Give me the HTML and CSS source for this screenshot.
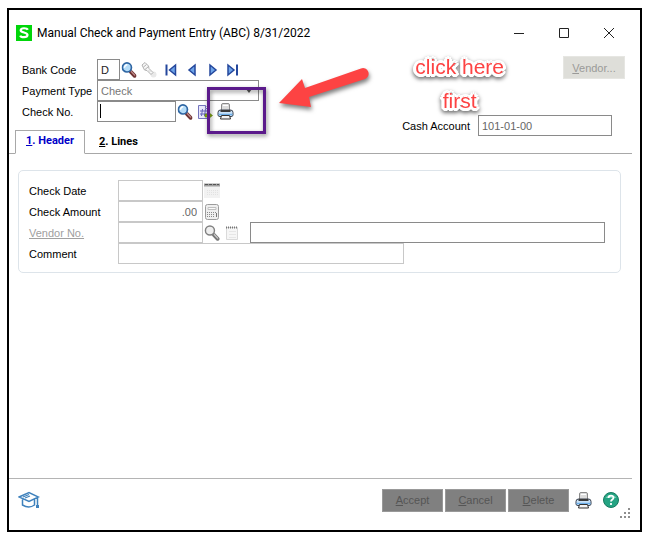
FILE: index.html
```html
<!DOCTYPE html>
<html lang="en">
<head>
  <meta charset="UTF-8">
  <title>Manual Check and Payment Entry</title>
  <link rel="stylesheet" href="styles.css">
</head>
<body>

<!-- Shared icons -->
<svg class="symbols" aria-hidden="true">
  <symbol id="lens" viewBox="0 0 16 17">
    <path d="M10 10.500l4 4.200" stroke="#6f3434" stroke-width="4" stroke-linecap="round"/>
    <path d="M10.500 10.200l3.500 3.700" stroke="#c48f8f" stroke-width="1.400" stroke-linecap="round"/>
    <circle cx="5.800" cy="5.800" r="4.800" fill="#b4dcf8" stroke="#2f66a3" stroke-width="1.800"/>
    <path d="M3.200 6a3 3 0 0 1 3-3" fill="none" stroke="#fff" stroke-width="1.500"/>
  </symbol>
  <symbol id="printer" viewBox="0 0 17 17">
    <path d="M4.500 8V2q0-1.500 1.500-1.500h5q1.500 0 1.500 1.500v6z" fill="#dcdcdc" stroke="#8a8a8a"/>
    <path d="M6 2.500h5" stroke="#fff"/>
    <path d="M1 9.500Q1 7 3.500 7h10Q16 7 16 9.500V12q0 1.500-2 1.500H3q-2 0-2-1.500z" fill="#c9e2f8" stroke="#39414f"/>
    <path d="M3.500 8h10" stroke="#3a3a3a" stroke-width="2"/>
    <path d="M1.500 11.500h14" stroke="#6caee8" stroke-width="1.500"/>
    <path d="M4.500 12.500h8l1 3.500h-10z" fill="#f4f4f4" stroke="#333"/>
  </symbol>
</svg>

<div class="window">
  <header class="titlebar">
    <svg class="logo" viewBox="0 0 16 16" aria-hidden="true">
      <rect width="16" height="16" fill="#00d60a"/>
      <path d="M11.800 4.800C11 3 5 2.300 4.700 5.200c-.2 3 7 1.700 6.800 4.800-.2 3-6.500 2.700-7.300.6" fill="none" stroke="#fff" stroke-width="2.200"/>
    </svg>
    <h1>Manual Check and Payment Entry (ABC) 8/31/2022</h1>
    <div class="window-controls">
      <button aria-label="Minimize"><svg viewBox="0 0 12 12"><path d="M1 6.500h10"/></svg></button>
      <button aria-label="Maximize"><svg viewBox="0 0 12 12"><path d="M1.500 1.500h9v9h-9z"/></svg></button>
      <button aria-label="Close"><svg viewBox="0 0 12 12"><path d="M1 1l10 10M11 1L1 11"/></svg></button>
    </div>
  </header>

  <section class="entry">
    <div class="entry-fields">
      <label for="bankCode">Bank Code</label>
      <div class="field-row">
        <input type="text" id="bankCode" class="bank-code" value="D">
        <button class="icon" aria-label="Find bank"><svg viewBox="0 0 16 17"><use href="#lens"/></svg></button>
        <button class="icon" aria-label="Filter" disabled><svg viewBox="0 0 16 16">
          <circle cx="12.500" cy="12.500" r="3" fill="#e9e9e9"/>
          <path d="M1 3l3-2.500L7.500 4 8 6.500l4 4-2 2-4-4L3.500 8z" fill="#f8f8f8" stroke="#b0b0b0"/>
          <path d="M2.500 5l3-2.500M4 7.500L7.500 4.500M8 8.500l1 1" stroke="#b0b0b0"/>
        </svg></button>
        <div class="record-nav">
          <button class="icon" aria-label="First record"><svg viewBox="0 0 16 16"><path d="M3.500 2.500v11" stroke="#24479c" stroke-width="2"/><path d="M12.500 3v10L6.500 8z" fill="#6ea4e8" stroke="#24479c" stroke-width="1.500"/></svg></button>
          <button class="icon" aria-label="Previous record"><svg viewBox="0 0 16 16"><path d="M11 3v10L5 8z" fill="#6ea4e8" stroke="#24479c" stroke-width="1.500"/></svg></button>
          <button class="icon" aria-label="Next record"><svg viewBox="0 0 16 16"><path d="M5 3v10l6-5z" fill="#6ea4e8" stroke="#24479c" stroke-width="1.500"/></svg></button>
          <button class="icon" aria-label="Last record"><svg viewBox="0 0 16 16"><path d="M2 3v10l6-5z" fill="#6ea4e8" stroke="#24479c" stroke-width="1.500"/><path d="M11 2.500v11" stroke="#24479c" stroke-width="2"/></svg></button>
        </div>
      </div>

      <label for="paymentType">Payment Type</label>
      <div class="select-wrap">
        <select id="paymentType" disabled><option>Check</option></select>
        <svg viewBox="0 0 6 4" aria-hidden="true"><path d="M0 0h6L3 4z" fill="#555"/></svg>
      </div>

      <label for="checkNo">Check No.</label>
      <div class="field-row">
        <div class="check-wrap"><input type="text" id="checkNo" class="check-no"><span class="caret"></span></div>
        <button class="icon" aria-label="Find check"><svg viewBox="0 0 16 17"><use href="#lens"/></svg></button>
        <button class="icon" aria-label="Next check number"><svg viewBox="0 0 16 16">
          <path d="M1.500 1.500h7l3 3v10h-10z" fill="#e8e8fb" stroke="#7474bd"/>
          <path d="M8.500 1.500v3h3" fill="#fff" stroke="#7474bd"/>
          <path d="M5.500 5l-1 7M8.500 5l-1 7M3 7h7M3 10h7" stroke="#6464ba"/>
          <path d="M8 10h3V8l4.500 3.500L11 15v-2H8z" fill="#8bb414" stroke="#5e8209" stroke-width=".6"/>
        </svg></button>
        <button class="icon print" aria-label="Print check"><svg viewBox="0 0 17 17"><use href="#printer"/></svg></button>
      </div>
    </div>

    <div class="entry-side">
      <button class="vendor" disabled><u>V</u>endor...</button>
      <div class="cash-account">
        <label for="cashAccount">Cash Account</label>
        <input type="text" id="cashAccount" value="101-01-00" readonly>
      </div>
    </div>
  </section>

  <nav class="tabs">
    <a href="#header" class="active"><u>1</u>. Header</a>
    <a href="#lines"><u>2</u>. Lines</a>
  </nav>

  <main class="tab-page" id="header">
    <div class="panel">
      <label for="checkDate">Check Date</label>
      <div class="field-row">
        <input type="text" id="checkDate" class="short" disabled>
        <button class="icon" aria-label="Calendar" disabled><svg viewBox="0 0 16 16">
          <path d="M0 3h16v12H0z" fill="#f2f2f2"/>
          <path d="M0 2h16" stroke="#a0a0a0" stroke-width="3"/>
          <path d="M1 1.500h14" stroke="#555" stroke-dasharray="3 1"/>
          <path d="M3 7.500h11M3 9.500h11M3 11.500h11" stroke="#e2e2e2" stroke-dasharray="1 1"/>
        </svg></button>
      </div>

      <label for="checkAmount">Check Amount</label>
      <div class="field-row">
        <input type="text" id="checkAmount" class="short amount" value=".00" disabled>
        <button class="icon" aria-label="Calculator" disabled><svg viewBox="0 0 16 16">
          <rect x="1.500" y=".5" width="13" height="15" rx="2" fill="#efefef" stroke="#9c9c9c"/>
          <path d="M4 3.500h8v2H4z" fill="#fafafa" stroke="#c0c0c0"/>
          <path d="M3 8.500h10M3 10.500h8M3 12.500h8" stroke="#8a8a8a" stroke-dasharray="1 1"/>
          <path d="M12.500 9v4" stroke="#777"/>
        </svg></button>
      </div>

      <label for="vendorNo" class="off"><u>Vendor No.</u></label>
      <div class="field-row">
        <input type="text" id="vendorNo" class="short" disabled>
        <button class="icon" aria-label="Find vendor" disabled><svg viewBox="0 0 16 17">
          <path d="M10 10.500l4 4.200" stroke="#777" stroke-width="4" stroke-linecap="round"/>
          <path d="M10.500 10.200l3.500 3.700" stroke="#ccc" stroke-width="1.400" stroke-linecap="round"/>
          <circle cx="5.800" cy="5.800" r="4.800" fill="#eee" stroke="#808080" stroke-width="1.500"/>
        </svg></button>
        <button class="icon memo" aria-label="Memo" disabled><svg viewBox="0 0 16 16">
          <path d="M2.500 2.500h11v12h-11z" fill="#f6f6f6" stroke="#dadada"/>
          <path d="M2 2.500h12" stroke="#777" stroke-width="2" stroke-dasharray="1 1"/>
          <path d="M5 6.500h7M5 9.500h7M5 12.500h7" stroke="#e6e6e6"/>
        </svg></button>
        <input type="text" class="vendor-name" aria-label="Vendor name" readonly>
      </div>

      <label for="comment">Comment</label>
      <div class="field-row">
        <input type="text" id="comment" class="comment" disabled>
      </div>
    </div>
  </main>

  <footer class="actions">
    <button class="icon learn" aria-label="Learning center"><svg viewBox="0 0 22 18">
      <path d="M1 6l10-4.500L20.500 6 11 10.500zM4.500 8.500V14q6.500 4 12 0V8.500M19.500 7v8" fill="#fff" stroke="#3f82bd" stroke-width="1.500"/>
      <path d="M5 6l6-2.500M7 7l5-2" stroke="#3f82bd" stroke-width="1.200"/>
      <path d="M18 14h3v3h-3z" fill="#3f82bd"/>
    </svg></button>
    <div class="buttons">
      <button disabled><u>A</u>ccept</button>
      <button disabled><u>C</u>ancel</button>
      <button disabled><u>D</u>elete</button>
    </div>
    <button class="icon print" aria-label="Print"><svg viewBox="0 0 17 17"><use href="#printer"/></svg></button>
    <button class="icon help" aria-label="Help"><svg viewBox="0 0 16 16">
      <circle cx="8" cy="8" r="7.500" fill="#24a382" stroke="#157a5f"/>
      <path d="M2.500 6a6 5 0 0 1 11 0" fill="#6cc9b0"/>
      <path d="M5.500 6c0-3.200 5-3.200 5-.2 0 1.700-2.500 1.700-2.500 3.700M8 11v2" fill="none" stroke="#fff" stroke-width="1.800"/>
    </svg></button>
    <svg class="grip" viewBox="0 0 10 10" aria-hidden="true"><path d="M8 0h2v2H8zM4 4h2v2H4zM8 4h2v2H8zM0 8h2v2H0zM4 8h2v2H4zM8 8h2v2H8z" fill="#8e8e8e"/></svg>
  </footer>

  <!-- Callouts -->
  <div class="highlight"></div>
  <svg class="arrow" viewBox="0 0 96 48" aria-hidden="true">
    <path d="M2 37L25 13l3 9L84 2.500a5.500 5.500 0 0 1 4 10.500L32 31l2 10z" fill="#fd4343"/>
  </svg>
  <p class="callout">click here<br>first</p>
</div>

</body>
</html>
```
FILE: styles.css
```css
* {
  box-sizing: border-box;
}

body {
  margin: 8px 5px 4px 7px;
  background: #fff;
  font-family: 'Liberation Sans', Arial, sans-serif;
  font-size: 11px;
  color: #000;
}

.symbols {
  display: none;
}

.window {
  position: relative;
  display: flex;
  flex-direction: column;
  min-height: calc(100vh - 12px);
  border: 2px solid #000;
}

svg {
  display: block;
}

input, select, button {
  font: inherit;
  margin: 0;
}

input, select {
  height: 21px;
  padding: 0 3px;
  border: 1px solid #8a8a8a;
  border-radius: 0;
  background: #fff;
  color: #222;
  outline: none;
}

input:disabled {
  border-color: #c8c8c8;
  color: #666;
}

.icon {
  flex: none;
  width: 16px;
  height: 16px;
  padding: 0;
  border: none;
  background: none;
}

.icon svg {
  width: 100%;
  height: 100%;
  fill: none;
}

.print {
  width: 17px;
  height: 17px;
}

/* Title bar */
.titlebar {
  display: flex;
  align-items: center;
  height: 46px;
  padding: 0 23px 0 7px;
}

.logo {
  width: 16px;
  height: 16px;
}

h1 {
  margin: 0 0 0 5px;
  font-family: Roboto, 'Open Sans', sans-serif;
  font-size: 12px;
  font-weight: normal;
}

.window-controls {
  display: flex;
  gap: 29px;
  margin-left: auto;
}

.window-controls button {
  width: 16px;
  padding: 2px;
  border: none;
  background: none;
}

.window-controls svg {
  width: 12px;
  height: 12px;
  fill: none;
  stroke: #222;
}

/* Entry fields */
.entry {
  display: flex;
  justify-content: space-between;
  padding: 0 15px 0 13px;
}

.entry-fields {
  display: grid;
  grid-template-columns: 75px auto;
  grid-auto-rows: 21px;
  align-content: start;
  align-items: center;
  padding-top: 3px;
}

.field-row {
  display: flex;
  align-items: center;
  gap: 1px;
}

.field-row .icon + .icon {
  margin-left: 3px;
}

.bank-code {
  width: 23px;
}

.check-wrap {
  position: relative;
}

.check-no {
  display: block;
  width: 79px;
}

.caret {
  position: absolute;
  top: 3px;
  left: 3px;
  width: 1px;
  height: 14px;
  background: #000;
}

.record-nav {
  display: flex;
  gap: 5px;
  margin-left: 5px;
}

.record-nav .icon + .icon {
  margin-left: 0;
}

.select-wrap {
  position: relative;
  width: 162px;
}

.select-wrap select {
  display: block;
  width: 100%;
  appearance: none;
  color: #777;
  opacity: 1;
}

.select-wrap svg {
  position: absolute;
  top: 9px;
  right: 7px;
  width: 6px;
  height: 4px;
}

.entry-side {
  display: flex;
  flex-direction: column;
  align-items: flex-end;
  gap: 36px;
}

.vendor {
  width: 62px;
  height: 23px;
  padding: 0;
  border: 1px solid #e6e6e2;
  background: #deded9;
  color: #9a9a98;
}

.cash-account {
  display: flex;
  align-items: center;
  gap: 8px;
  margin-right: 13px;
}

.cash-account input {
  width: 134px;
  color: #666;
}

/* Tabs */
.tabs {
  display: flex;
  height: 24px;
  margin: -6px 8px 0 0;
  font-family: Roboto, 'Open Sans', sans-serif;
  font-weight: bold;
}

.tabs::before {
  content: "";
  width: 6px;
  border-bottom: 1px solid #a8a8a8;
}

.tabs a {
  padding: 4px 14px 0;
  border-bottom: 1px solid #a8a8a8;
  line-height: 15px;
  color: #000;
  text-decoration: none;
}

.tabs a:last-child {
  flex: 1;
}

.tabs .active {
  width: 70px;
  padding: 2px 0 0 10px;
  border: 1px solid #a8a8a8;
  border-bottom-color: #fff;
  color: #0000c8;
}

.tab-page {
  flex: 1;
  padding: 16px 19px 16px 9px;
}

.panel {
  display: grid;
  grid-template-columns: 89px 1fr;
  grid-auto-rows: 21px;
  align-items: center;
  padding: 9px 15px 8px 10px;
  border: 1px solid #dde4ea;
  border-radius: 5px;
}

.short {
  width: 85px;
}

.amount {
  padding-right: 5px;
  text-align: right;
}

.off {
  color: #a0a0a0;
}

.vendor-name {
  flex: 1;
  margin-left: 9px;
}

.comment {
  width: 286px;
}

/* Footer */
.actions {
  position: relative;
  display: flex;
  align-items: center;
  gap: 6px;
  height: 52px;
  padding: 0 21px 8px 9px;
}

.actions::before {
  content: "";
  position: absolute;
  top: 0;
  left: 0;
  right: 8px;
  border-top: 1px solid #b4b4b4;
}

.learn {
  width: 22px;
  height: 18px;
  margin-right: auto;
}

.buttons {
  display: flex;
  gap: 2px;
}

.buttons button {
  width: 61px;
  height: 23px;
  padding: 0;
  border: 1px solid #999;
  background: #808080;
  color: #555;
}

.help {
  margin-left: 5px;
}

.grip {
  position: absolute;
  right: 10px;
  bottom: 12px;
  width: 10px;
  height: 10px;
}

/* Callouts drawn over the window */
.highlight {
  position: absolute;
  top: 77px;
  left: 198px;
  width: 59px;
  height: 47px;
  border: 3px solid #5b1a8b;
  filter: drop-shadow(1px 2px 2px rgba(0, 0, 0, 0.45));
  pointer-events: none;
}

.arrow {
  position: absolute;
  top: 56px;
  left: 268px;
  width: 96px;
  height: 48px;
  overflow: visible;
  filter: drop-shadow(1px 3px 2px rgba(0, 0, 0, 0.5));
}

.callout {
  position: absolute;
  top: 40px;
  right: 136px;
  margin: 0;
  font-size: 21px;
  line-height: 34px;
  text-align: center;
  color: #fd4343;
  text-shadow:
    3px 0 #fff, -3px 0 #fff, 0 3px #fff, 0 -3px #fff,
    2px 2px #fff, -2px 2px #fff, 2px -2px #fff, -2px -2px #fff,
    1px 3px #fff, -1px 3px #fff, 3px 1px #fff, -3px 1px #fff;
  filter: drop-shadow(0 2px 2px rgba(0, 0, 0, 0.6));
}
```
